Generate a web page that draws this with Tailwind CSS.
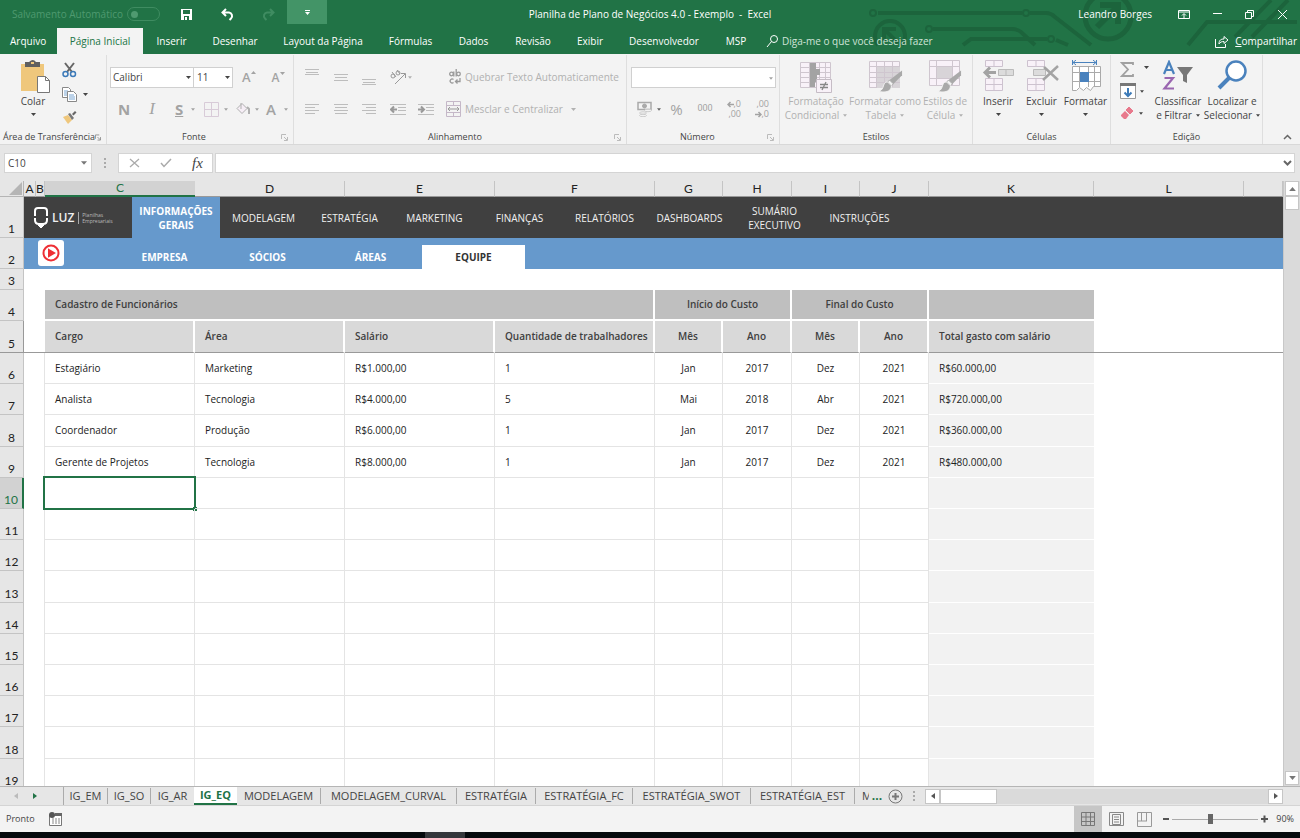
<!DOCTYPE html>
<html lang="pt-BR">

<head>
	<meta charset="UTF-8" />
	<meta name="viewport" content="width=device-width, initial-scale=1.0" />
	<title>Planilha de Plano de Negócios 4.0 - Exemplo - Excel</title>
	<script src="https://cdn.jsdelivr.net/npm/@tailwindcss/browser@4"></script>
</head>

<body class="h-screen flex flex-col overflow-hidden bg-[#e6e6e6] font-['Open_Sans',sans-serif] text-[10px] text-[#444]">
	<!-- shared glyphs -->
	<svg class="hidden">
		<symbol id="caret" viewBox="0 0 5 3"><path d="M0 0h5L2.500 3z" fill="currentColor" /></symbol>
		<symbol id="launcher" viewBox="0 0 7 7"><path d="M.5 5V.5H5M3 3l3 3M6.500 3v3.500H3" fill="none" stroke="currentColor" /></symbol>
		<symbol id="brush" viewBox="0 0 26 24">
			<path d="M25 1v5l-9 9-4-4z" fill="#a9a9a9" /><path d="M16 15l-4-4-2 2 4 4z" fill="#f3f3f3" stroke="#a9a9a9" />
			<path d="M10 13c-4 0-4 4-5 6s-2 3-4 4c5 1 13 1 13-6z" fill="#a9a9a9" stroke="#f3f3f3" />
		</symbol>
	</svg>

	<header class="relative shrink-0 bg-[#217346] text-white">
		<svg class="absolute right-0 top-0 w-[450px] h-[54px]" viewBox="0 0 450 54" fill="none" stroke="#1c643c" stroke-width="4">
			<path d="M28 13h144M180 13h16q5 0 9 4l36 28M83 29h79q5 0 9 3l14 13M113 45l8-6h76M206 40l12 5M338 45l19-23h90M402 37l36-37M385 37l36-37" />
			<circle cx="23" cy="13" r="3" stroke-width="2" /><circle cx="176" cy="13" r="3" stroke-width="2" />
			<circle cx="79" cy="29" r="3" stroke-width="2" /><circle cx="201" cy="39" r="3" stroke-width="2" />
			<path d="M28 45a15 15 0 1 1 24 0M34 41V29h12M34 29l14 14" />
			<circle cx="258" cy="16" r="23" stroke-width="5" /><path d="M247 27l21-21M250 5h18v19" stroke-width="6" />
		</svg>
		<div class="relative flex h-7 items-center">
			<div class="flex flex-1 items-center pl-3">
				<label for="autosave" class="w-[115px] text-[#4f9a70] whitespace-nowrap">Salvamento Automático</label>
				<span class="relative w-[33px] h-[14px] rounded-full border border-[#3f8c61]">
					<input id="autosave" type="checkbox" class="appearance-none absolute left-[3px] top-[3px] size-[7px] rounded-full bg-[#4f9a70]" />
				</span>
				<button aria-label="Salvar" class="ml-5"><svg width="13" height="13" viewBox="0 0 13 13"><path d="M1 1h11v11H1z" fill="#fff" /><path d="M3 2h7v4H3zM4 8h5v4H4z" fill="#217346" /><path d="M5 9h2v3H5z" fill="#fff" /></svg></button>
				<button aria-label="Desfazer" class="ml-7"><svg width="13" height="13" viewBox="0 0 13 13" fill="none" stroke="#fff" stroke-width="2"><path d="M5 1L1.500 4.500 5 8M2 4.500h6a3.500 3.500 0 0 1 2 6L8.500 12" /></svg></button>
				<button aria-label="Refazer" class="ml-7"><svg width="13" height="13" viewBox="0 0 13 13" fill="none" stroke="#3f8c61" stroke-width="2"><path d="M8 1l3.500 3.500L8 8M11 4.500H5a3.500 3.500 0 0 0-2 6L4.500 12" /></svg></button>
				<button aria-label="Personalizar" class="ml-3 mb-1 flex h-6 w-10 items-center justify-center bg-[#439467]"><svg width="5" height="5" viewBox="0 0 5 5"><path d="M0 0h5v1H0zM0 2h5L2.500 5z" fill="#fff" /></svg></button>
			</div>
			<h1 class="whitespace-pre">Planilha de Plano de Negócios 4.0 - Exemplo  -  Excel</h1>
			<div class="flex flex-1 items-center justify-end gap-[22px] pr-3">
				<a href="#" class="mr-1">Leandro Borges</a>
				<button aria-label="Opções da faixa"><svg width="12" height="11" viewBox="0 0 12 11" fill="none" stroke="#fff"><path d="M.5 1.500h11v8H.5zM.5 3h11M6 9V5M4 6.500L6 4.500l2 2" /></svg></button>
				<button aria-label="Minimizar"><svg width="10" height="10" viewBox="0 0 10 10"><path d="M1 4h9v1H1z" fill="#fff" /></svg></button>
				<button aria-label="Restaurar"><svg width="11" height="11" viewBox="0 0 11 11" fill="none" stroke="#fff"><path d="M1.500 3.500h6v6h-6zM3.500 3V1.500h6v6H8" /></svg></button>
				<button aria-label="Fechar"><svg width="11" height="11" viewBox="0 0 11 11" stroke="#fff"><path d="M1 1l9 9M10 1l-9 9" /></svg></button>
			</div>
		</div>
		<nav class="relative flex h-[26px] items-center whitespace-nowrap">
			<a href="#" class="w-[57px] pl-[10px]">Arquivo</a>
			<a href="#" class="flex h-full w-[86px] items-center justify-center bg-[#f3f3f3] text-[#217346]">Página Inicial</a>
			<a href="#" class="w-[57px] text-center">Inserir</a>
			<a href="#" class="w-[70px] text-center">Desenhar</a>
			<a href="#" class="w-[106px] text-center">Layout da Página</a>
			<a href="#" class="w-[69px] text-center">Fórmulas</a>
			<a href="#" class="w-[57px] text-center">Dados</a>
			<a href="#" class="w-[62px] text-center">Revisão</a>
			<a href="#" class="w-[52px] text-center">Exibir</a>
			<a href="#" class="w-24 text-center">Desenvolvedor</a>
			<a href="#" class="w-12 text-center">MSP</a>
			<label for="tellme" class="ml-[6px]"><svg width="13" height="14" viewBox="0 0 13 14" fill="none" stroke="#fff"><circle cx="8" cy="5" r="3.500" /><path d="M5.500 7.500L1 13" /></svg></label>
			<input id="tellme" placeholder="Diga-me o que você deseja fazer" class="ml-[3px] min-w-0 flex-1 outline-none placeholder:text-[#d0e3d8]" />
			<button class="flex items-center gap-[6px] pr-[3px]">
				<svg width="14" height="13" viewBox="0 0 14 13" fill="none" stroke="#fff"><path d="M.5 4v8.500h10V9M4 9c0-4 2-5 5-5V1.500L13 5 9 8.500V6.500C7 6.500 5 7 4 9z" /></svg>
				<span><u>C</u>ompartilhar</span>
			</button>
		</nav>
	</header>

	<section class="flex h-[91px] shrink-0 border-b border-[#d8d8d8] bg-[#f3f3f3] pt-px whitespace-nowrap">
		<div class="flex w-[107px] shrink-0 flex-col border-r border-[#dedede]">
			<div class="flex h-[76px]">
				<button class="ml-[15px] mt-[5px] flex w-9 flex-col items-center leading-[14px]">
					<svg class="shrink-0" width="36" height="34" viewBox="0 0 36 34"><path d="M6 4h23v27H6z" fill="#efc77c" /><path d="M10 2h4q4-4 7 0h4v5H10z" fill="#5f5f5f" /><path d="M16 2h3v2h-3z" fill="#efc77c" /><path d="M22.500 16.500h8l4 4v12h-12z" fill="#fff" stroke="#777" /><path d="M30.500 16.500v4h4" fill="none" stroke="#777" /></svg>
					<span>Colar</span>
					<svg class="mt-[5px]" width="5" height="3"><use href="#caret" /></svg>
				</button>
				<div class="ml-[11px] mt-[7px] flex flex-col gap-[9px]">
					<button aria-label="Recortar"><svg width="15" height="16" viewBox="0 0 15 16" fill="none"><path d="M3 1l7 9M12 1L5 10" stroke="#666" stroke-width="2" /><circle cx="3.500" cy="12" r="2.500" stroke="#3c7ab8" stroke-width="1.500" /><circle cx="11" cy="12" r="2.500" stroke="#3c7ab8" stroke-width="1.500" /></svg></button>
					<button aria-label="Copiar" class="flex items-center gap-[6px]"><svg width="15" height="15" viewBox="0 0 15 15"><path d="M.5.5h6l2 2v8h-8z" fill="#fff" stroke="#888" /><path d="M2 4h4M2 6h4M2 8h3" stroke="#7ba7d4" /><path d="M5.500 4.500h6l3 3v7h-9z" fill="#fff" stroke="#888" /><path d="M7 8h5M7 10h6M7 12h6" stroke="#7ba7d4" /></svg><svg width="5" height="3"><use href="#caret" /></svg></button>
					<button aria-label="Pincel de Formatação"><svg width="15" height="13" viewBox="0 0 15 13"><path d="M1 6l5-2 4 5-4 4z" fill="#efc77c" /><path d="M6 3l2-1 4 5-2 2z" fill="#777" /><path d="M10 3l3-3 1.500 1.500-3 3z" fill="#666" /></svg></button>
				</div>
			</div>
			<div class="flex items-center justify-between pl-[3px] pr-[5px] text-[9px] leading-[14px]"><span>Área de Transferência</span><svg width="7" height="7" class="text-[#888]"><use href="#launcher" /></svg></div>
		</div>

		<div class="flex w-[187px] shrink-0 flex-col border-r border-[#dedede]">
			<div class="flex h-[76px] flex-col pl-[3px]">
				<div class="mt-3 flex h-[21px] items-center">
					<label class="relative h-full border border-[#d0d0d0] bg-white"><select aria-label="Fonte" class="h-full w-[82px] appearance-none px-[2px] outline-none"><option>Calibri</option></select><svg class="absolute right-[2px] top-2" width="5" height="3"><use href="#caret" /></svg></label>
					<label class="relative -ml-px h-full border border-[#d0d0d0] bg-white"><select aria-label="Tamanho" class="h-full w-[38px] appearance-none px-[3px] outline-none"><option>11</option></select><svg class="absolute right-[2px] top-2" width="5" height="3"><use href="#caret" /></svg></label>
					<button aria-label="Aumentar fonte" class="ml-[9px] flex text-[13px] font-semibold text-[#a3a3a3]">A<svg width="5" height="3" class="rotate-180 mt-[3px]"><use href="#caret" /></svg></button>
					<button aria-label="Diminuir fonte" class="ml-4 flex text-[12px] font-semibold text-[#a3a3a3]">A<svg width="5" height="3" class="mt-[3px]"><use href="#caret" /></svg></button>
				</div>
				<div class="mt-[11px] flex h-5 items-center text-[15px] text-[#a3a3a3]">
					<button class="w-7 font-bold">N</button>
					<button class="w-7 font-['Liberation_Serif',serif] text-[17px] italic">I</button>
					<button class="flex w-[38px] items-center gap-2 pl-[9px]"><b class="underline">S</b><svg width="4" height="3"><use href="#caret" /></svg></button>
					<button aria-label="Bordas" class="flex w-8 items-center gap-[5px]"><svg width="15" height="15" viewBox="0 0 15 15" fill="none" stroke="#d8cbd8"><path d="M.5.5h14v14H.5zM7.500 0v15M0 7.500h15" /></svg><svg width="4" height="3"><use href="#caret" /></svg></button>
					<button aria-label="Preenchimento" class="flex w-[30px] items-center gap-[5px]"><svg width="14" height="14" viewBox="0 0 14 14" fill="none" stroke="#b0b0b0"><path d="M1 6.500l5-5 5 5-5 5zM5 1v6" fill="#f6eef6" /><path d="M11 5l2 2v5" stroke-width="2" /></svg><svg width="4" height="3"><use href="#caret" /></svg></button>
					<button class="flex w-6 items-center gap-2 font-semibold">A<svg class="shrink-0" width="4" height="3"><use href="#caret" /></svg></button>
				</div>
			</div>
			<div class="flex items-center justify-between pl-[75px] pr-[5px] text-[9px] leading-[14px]"><span>Fonte</span><svg width="7" height="7" class="text-[#bbb]"><use href="#launcher" /></svg></div>
		</div>

		<div class="flex w-[333px] shrink-0 flex-col border-r border-[#dedede]">
			<div class="flex h-[76px] flex-col pl-[11px] text-[#b1b1b1]">
				<div class="mt-3 flex h-5 items-center">
					<button aria-label="Alinhar em cima" class="w-[29px]"><svg width="14" height="16" viewBox="0 0 14 16" stroke="#bdbdbd"><path d="M0 .5h14M1 3.500h12M0 5.500h14" /></svg></button>
					<button aria-label="Alinhar no meio" class="w-7"><svg width="14" height="16" viewBox="0 0 14 16" stroke="#bdbdbd"><path d="M0 5.500h14M1 8.500h12M0 11.500h14" /></svg></button>
					<button aria-label="Alinhar embaixo" class="w-7"><svg width="14" height="16" viewBox="0 0 14 16" stroke="#bdbdbd"><path d="M0 10.500h14M1 13.500h12M0 15.500h14" /></svg></button>
					<button aria-label="Orientação" class="flex w-[59px] items-center gap-[2px]"><svg width="16" height="16" viewBox="0 0 16 16" fill="none" stroke="#999"><circle cx="3" cy="7" r="2" /><path d="M2 3l4 5" /><circle cx="8" cy="4" r="2" /><path d="M7 1l3 4M5 15L15 5M11 4.500h4.500V9" /></svg><svg width="4" height="3"><use href="#caret" /></svg></button>
					<button class="flex items-center gap-[4px]"><svg width="12" height="16" viewBox="0 0 12 16" fill="none" stroke="#999" stroke-width="1.300"><circle cx="2.500" cy="5" r="1.800" /><path d="M4.800 2.500V7.500M7.200 0v7.500" /><circle cx="9.500" cy="5" r="1.800" /><path d="M4.500 10.500a2 2 0 1 0 0 3M11 9v3.500H6.500M8.500 10.500l-2 2 2 2" /></svg>Quebrar Texto Automaticamente</button>
				</div>
				<div class="mt-3 flex h-5 items-center">
					<button aria-label="Esquerda" class="w-[29px]"><svg width="14" height="10" viewBox="0 0 14 10" stroke="#bdbdbd"><path d="M0 .5h14M0 3.500h10M0 6.500h14M0 9.500h10" /></svg></button>
					<button aria-label="Centro" class="w-7"><svg width="14" height="10" viewBox="0 0 14 10" stroke="#bdbdbd"><path d="M0 .5h14M1 3.500h12M0 6.500h14M1 9.500h12" /></svg></button>
					<button aria-label="Direita" class="w-7"><svg width="14" height="10" viewBox="0 0 14 10" stroke="#bdbdbd"><path d="M0 .5h14M4 3.500h10M0 6.500h14M4 9.500h10" /></svg></button>
					<button aria-label="Diminuir recuo" class="w-7"><svg width="16" height="11" viewBox="0 0 16 11" fill="none" stroke="#bdbdbd"><path d="M0 .5h16M8 3.500h8M8 6.500h8M0 10.500h16" /><path d="M7 5.500H1M4 2.500l-3 3 3 3" stroke="#999" stroke-width="2" /></svg></button>
					<button aria-label="Aumentar recuo" class="w-7"><svg width="16" height="11" viewBox="0 0 16 11" fill="none" stroke="#bdbdbd"><path d="M0 .5h16M8 3.500h8M8 6.500h8M0 10.500h16" /><path d="M0 5.500h6M3 2.500l3 3-3 3" stroke="#999" stroke-width="2" /></svg></button>
					<button class="flex items-center gap-1"><svg width="15" height="16" viewBox="0 0 15 16" fill="none" stroke="#c5b8c8"><path d="M.5.5h14v15H.5zM0 4.500h15M0 11.500h15M7.500 0v4M7.500 12v4" /><path d="M2 8h11M4 6L2 8l2 2M11 6l2 2-2 2" stroke="#999" /></svg>Mesclar e Centralizar<svg class="ml-1" width="5" height="3"><use href="#caret" /></svg></button>
				</div>
			</div>
			<div class="flex items-center justify-between pl-[134px] pr-[5px] text-[9px] leading-[14px]"><span>Alinhamento</span><svg width="7" height="7" class="text-[#bbb]"><use href="#launcher" /></svg></div>
		</div>

		<div class="flex w-[153px] shrink-0 flex-col border-r border-[#dedede]">
			<div class="flex h-[76px] flex-col pl-1 text-[#a3a3a3]">
				<label class="relative mt-3 mr-[3px] h-[21px] border border-[#d0d0d0] bg-white"><select aria-label="Formato de número" class="h-full w-full appearance-none outline-none"><option></option></select><svg class="absolute right-[2px] top-[9px]" width="4" height="3"><use href="#caret" /></svg></label>
				<div class="mt-[11px] flex h-5 items-center">
					<button aria-label="Moeda" class="ml-[6px] flex w-8 items-center gap-1"><svg width="16" height="16" viewBox="0 0 16 16" fill="none" stroke="#aaa"><path d="M1 1.500h13v7H1z" stroke-width="1.500" /><circle cx="7.500" cy="5" r="2" fill="#aaa" /><g stroke="#ccc"><ellipse cx="11" cy="9.500" rx="3.500" ry="1.200" fill="#f3f3f3" /><ellipse cx="6" cy="12" rx="3.500" ry="1.200" fill="#f3f3f3" /><ellipse cx="6" cy="14.500" rx="3.500" ry="1.200" fill="#f3f3f3" /></g></svg><svg class="text-[#666]" width="4" height="3"><use href="#caret" /></svg></button>
					<button class="w-[15px] text-[15px]">%</button>
					<button class="ml-[13px] w-4 font-['Roboto',sans-serif] text-[9px]">000</button>
					<button class="ml-3 flex w-4 flex-col items-end text-[9px] leading-[10px]"><span class="flex items-center"><svg width="7" height="7" viewBox="0 0 7 7" fill="none" stroke="currentColor" stroke-width="1.500"><path d="M7 3.500H1M3.500 1L1 3.500 3.500 6" /></svg>,0</span><span>,00</span></button>
					<button class="ml-3 flex w-4 flex-col items-end text-[9px] leading-[10px]"><span>,00</span><span class="flex items-center"><svg width="7" height="7" viewBox="0 0 7 7" fill="none" stroke="currentColor" stroke-width="1.500"><path d="M0 3.500h6M3.500 1L6 3.500 3.500 6" /></svg>,0</span></button>
				</div>
			</div>
			<div class="flex items-center justify-between pl-[53px] pr-[5px] text-[9px] leading-[14px]"><span>Número</span><svg width="7" height="7" class="text-[#bbb]"><use href="#launcher" /></svg></div>
		</div>

		<div class="flex w-[193px] shrink-0 flex-col border-r border-[#dedede]">
			<div class="flex h-[76px] pl-[2px] pt-[5px] text-[#b1b1b1] leading-[14px]">
				<button class="flex w-[68px] flex-col items-center">
					<svg class="shrink-0" width="34" height="34" viewBox="0 0 34 34"><path d="M1.500 2.500h30v25h-30z" fill="#f8f1f8" stroke="#cfc6cf" /><path d="M1 7.500h31M1 12.500h31M1 17.500h31M1 22.500h31M10.500 2v26M20.500 2v26M26.500 2v26" stroke="#cfc6cf" /><path d="M11 3h6v6h4v6h-3v7h-2v5h-5z" fill="#a3a3a3" /><path d="M17.500 19.500h15v13h-15z" fill="#f8f1f8" stroke="#c5bcc5" /><path d="M21 24.500h8M21 27.500h8M27 22l-4 8" stroke="#888" stroke-width="1.300" /></svg>
					<span>Formatação</span><span class="flex items-center gap-[4px]">Condicional<svg width="4" height="3"><use href="#caret" /></svg></span>
				</button>
				<button class="flex w-[70px] flex-col items-center">
					<svg class="shrink-0" width="36" height="34" viewBox="0 0 36 34"><path d="M2.500 1.500h30v26h-30z" fill="#f8f1f8" stroke="#cfc6cf" /><path d="M10 7h23v21H10z" fill="#d8d4d8" /><path d="M2 6.500h31M2 12.500h31M2 17.500h31M2 22.500h31M9.500 1v26M17.500 1v26M25.500 1v26" stroke="#cfc6cf" /><use href="#brush" x="11" y="9" width="25" height="24" /></svg>
					<span>Formatar como</span><span class="flex items-center gap-[4px]">Tabela<svg width="4" height="3"><use href="#caret" /></svg></span>
				</button>
				<button class="flex w-[50px] flex-col items-center">
					<svg class="shrink-0" width="34" height="34" viewBox="0 0 34 34"><path d="M1.500.5h30v25h-30z" fill="#f8f1f8" stroke="#cfc6cf" /><path d="M1 6.500h31M1 18.500h31M8.500 0v26M24.500 0v26" stroke="#cfc6cf" /><path d="M9 7h15v11H9z" fill="#d8d4d8" /><use href="#brush" x="9" y="9" width="25" height="24" /></svg>
					<span>Estilos de</span><span class="flex items-center gap-[4px]">Célula<svg width="4" height="3"><use href="#caret" /></svg></span>
				</button>
			</div>
			<div class="text-center text-[9px] leading-[14px]">Estilos</div>
		</div>

		<div class="flex w-[138px] shrink-0 flex-col border-r border-[#dedede]">
			<div class="flex h-[76px] pl-[3px] pt-[5px] leading-[14px]">
				<button class="flex w-11 flex-col items-center">
					<svg class="shrink-0" width="34" height="34" viewBox="0 0 34 34" fill="#f8f1f8" stroke="#cdc2cf"><path d="M4.500.5h17v6h-17zM13 0v7M4.500 18.500h17v12h-17zM13 18v13M4 24.500h18" /><path d="M17.500 9.500h15v6h-15z" fill="#dcdcdc" stroke="#bbb" /><path d="M25 9v7" stroke="#bbb" /><path d="M15 12.500H4M9 7.500l-5 5 5 5" stroke="#a3a3a3" stroke-width="3" fill="none" /></svg>
					<span>Inserir</span><svg class="mt-[5px]" width="5" height="3"><use href="#caret" /></svg>
				</button>
				<button class="flex w-[43px] flex-col items-center">
					<svg class="shrink-0" width="34" height="34" viewBox="0 0 34 34" fill="#f8f1f8" stroke="#cdc2cf"><path d="M2.500.5h17v6h-17zM11 0v7M2.500 18.500h17v12h-17zM11 18v13M2 24.500h18" /><path d="M8.500 9.500h12v6h-12z" fill="#dcdcdc" stroke="#bbb" /><path d="M19 7l14 13M33 6L18 20" stroke="#a3a3a3" stroke-width="2.500" fill="none" /></svg>
					<span>Excluir</span><svg class="mt-[5px]" width="5" height="3"><use href="#caret" /></svg>
				</button>
				<button class="flex w-[45px] flex-col items-center">
					<svg class="shrink-0" width="32" height="34" viewBox="0 0 32 34" fill="#fff" stroke="#aaa"><path d="M2.500 6.500h28v20h-7l-3 4-4-3-3 3-4-3-3 3h-4z" /><path d="M2 12.500h28M2 21.500h28M9.500 6v21M18.500 6v21M24.500 6v21" /><path d="M10 12h9v10h-9z" fill="#4a82bd" stroke="none" /><path d="M3 2.500h23M6 0L3 2.500 6 5M23 0l3 2.500L23 5M2.500 0v5M26.500 0v5" stroke="#4a82bd" fill="none" /></svg>
					<span>Formatar</span><svg class="mt-[5px]" width="5" height="3"><use href="#caret" /></svg>
				</button>
			</div>
			<div class="text-center text-[9px] leading-[14px]">Células</div>
		</div>

		<div class="flex w-[152px] shrink-0 flex-col border-r border-[#dedede]">
			<div class="flex h-[76px] pl-[9px] pt-[3px] leading-[14px]">
				<div class="flex w-8 flex-col">
					<button aria-label="Soma" class="flex h-[22px] items-center gap-[10px]"><svg width="14" height="15" viewBox="0 0 14 15" fill="none" stroke="#a0a0a0" stroke-width="1.800"><path d="M13 3V1H2l6 6.500L2 14h11v-2" /></svg><svg class="mb-1" width="5" height="3"><use href="#caret" /></svg></button>
					<button aria-label="Preencher" class="flex h-[22px] items-center gap-1"><svg width="16" height="16" viewBox="0 0 16 16" fill="#fff" stroke="#999"><path d="M.5 2.500h15v13H.5z" /><path d="M0 1.500h16" stroke="#777" stroke-width="3" /><path d="M8 5v8M4.500 9.500L8 13l3.500-3.500" fill="none" stroke="#3c7ab8" stroke-width="2" /></svg><svg width="4" height="3"><use href="#caret" /></svg></button>
					<button aria-label="Limpar" class="flex h-[22px] items-center gap-1"><svg width="15" height="13" viewBox="0 0 15 13"><path d="M9 0l4 4-3 3-4-4z" fill="#e8798c" stroke="#e8798c" stroke-linejoin="round" /><path d="M5 4l4 4-3 4H4L1 9V8z" fill="#e8798c" /></svg><svg width="4" height="3"><use href="#caret" /></svg></button>
				</div>
				<button class="flex w-[52px] flex-col items-center pt-[2px]">
					<svg class="shrink-0" width="32" height="34" viewBox="0 0 32 34" fill="none" stroke-width="2.200"><path d="M2 14L7 2l5 12M4 10h6" stroke="#4a82bd" /><path d="M2.500 18H11L2.500 28.500H12" stroke="#9a66b0" /><path d="M15 7h16l-6 8v8l-4-2v-6z" fill="#777" /></svg>
					<span>Classificar</span><span class="flex items-center gap-[4px]">e Filtrar<svg width="4" height="3"><use href="#caret" /></svg></span>
				</button>
				<button class="flex w-[56px] flex-col items-center pt-[2px]">
					<svg class="shrink-0" width="32" height="34" viewBox="0 0 32 34" fill="none" stroke="#4a82bd"><circle cx="20" cy="11" r="9.500" fill="#fff" stroke-width="2.500" /><path d="M13 18L3 28" stroke-width="4" /></svg>
					<span>Localizar e</span><span class="flex items-center gap-[4px]">Selecionar<svg width="4" height="3"><use href="#caret" /></svg></span>
				</button>
			</div>
			<div class="text-center text-[9px] leading-[14px]">Edição</div>
		</div>
		<button aria-label="Recolher" class="ml-auto mr-2 self-end pb-1"><svg width="9" height="6" viewBox="0 0 9 6" fill="none" stroke="#666" stroke-width="1.500"><path d="M1 5l3.500-3.500L8 5" /></svg></button>
	</section>

	<section class="flex h-9 shrink-0 items-start pt-2">
		<label class="relative ml-1"><input aria-label="Caixa de nome" value="C10" class="h-[20px] w-[88px] border border-[#d4d4d4] bg-white px-[3px] outline-none" /><svg class="absolute right-[5px] top-[8px] text-[#777]" width="6" height="4"><use href="#caret" /></svg></label>
		<svg class="mx-[10px] mt-[5px]" width="6" height="10" viewBox="0 0 6 10" fill="#aaa"><path d="M2 0h2v2H2zM2 4h2v2H2zM2 8h2v2H2z" /></svg>
		<div class="flex h-5 w-[95px] items-center border border-[#d4d4d4] bg-white">
			<button aria-label="Cancelar" class="ml-[10px]"><svg width="11" height="10" viewBox="0 0 11 10" stroke="#aaa" stroke-width="1.300"><path d="M1 1l9 8M10 1L1 9" /></svg></button>
			<button aria-label="Inserir valor" class="ml-5"><svg width="12" height="10" viewBox="0 0 12 10" fill="none" stroke="#aaa" stroke-width="1.500"><path d="M1 5l3 3.500L11 1" /></svg></button>
			<button class="ml-5 font-['Liberation_Serif',serif] text-[15px] italic">fx</button>
		</div>
		<label class="relative ml-[2px] mr-[5px] flex-1"><input aria-label="Barra de fórmulas" class="h-5 w-full border border-[#d4d4d4] bg-white px-1 outline-none" /><svg class="absolute right-[3px] top-[7px]" width="9" height="6" viewBox="0 0 9 6" fill="none" stroke="#666" stroke-width="2"><path d="M1 1l3.500 3.500L8 1" /></svg></label>
	</section>

	<main class="flex min-h-0 flex-1">
		<div class="min-w-0 flex-1 overflow-hidden bg-white">
			<table class="w-full table-fixed border-separate border-spacing-0 text-[10px] text-[#222]">
				<colgroup>
					<col class="w-6"><col class="w-3"><col class="w-[9px]"><col class="w-[150px]"><col class="w-[150px]"><col class="w-[150px]"><col class="w-[160px]"><col class="w-[68px]"><col class="w-[69px]"><col class="w-[68px]"><col class="w-[69px]"><col class="w-[165px]"><col class="w-[150px]"><col>
				</colgroup>
				<thead>
					<tr id="letters" class="h-4 bg-[#e6e6e6] font-['Lato',sans-serif]">
						<th class="border-b border-r border-[#b5b5b5] p-0"><svg class="ml-auto mr-[1px]" width="13" height="13" viewBox="0 0 13 13"><path d="M13 0v13H0z" fill="#b5b5b5" /></svg></th>
					</tr>
				</thead>
				<tbody id="sheet">
					<tr class="h-[41px]">
						<th class="border-b border-r border-[#c4c4c4] bg-[#e6e6e6] p-0 align-bottom font-['Lato',sans-serif] text-[12px] font-normal leading-4">1</th>
						<td colspan="13" class="bg-[#404040] p-0">
							<nav class="flex h-[41px] items-stretch leading-[14px] text-[#f0f0f0]">
								<a href="#" class="flex w-[108px] items-center pl-[9px]">
									<svg width="16" height="22" viewBox="0 0 16 22" fill="none" stroke="#fff" stroke-width="2"><path d="M2 9V4q0-3 3-3h6q3 0 3 3v5M2 11v2q0 4 4 4h4q4 0 4-4v-2" /><path d="M5 18h6l-3 3z" fill="#fff" stroke-width="1" /></svg>
									<span class="ml-[3px] text-[12px] font-semibold">LUZ</span>
									<span class="ml-1 border-l border-[#aaa] pl-[3px] text-[5px] leading-[6px] text-[#bbb]">Planilhas<br>Empresariais</span>
								</a>
								<a href="#" class="flex w-[88px] items-center justify-center bg-[#6699cc] text-center font-bold text-white">INFORMAÇÕES<br>GERAIS</a>
								<a href="#" class="flex w-[87px] items-center justify-center">MODELAGEM</a>
								<a href="#" class="flex w-[85px] items-center justify-center">ESTRATÉGIA</a>
								<a href="#" class="flex w-[85px] items-center justify-center">MARKETING</a>
								<a href="#" class="flex w-[85px] items-center justify-center">FINANÇAS</a>
								<a href="#" class="flex w-[85px] items-center justify-center">RELATÓRIOS</a>
								<a href="#" class="flex w-[85px] items-center justify-center">DASHBOARDS</a>
								<a href="#" class="flex w-[85px] items-center justify-center text-center">SUMÁRIO<br>EXECUTIVO</a>
								<a href="#" class="flex w-[85px] items-center justify-center">INSTRUÇÕES</a>
							</nav>
						</td>
					</tr>
					<tr class="h-[31px]">
						<th class="border-b border-r border-[#c4c4c4] bg-[#e6e6e6] p-0 align-bottom font-['Lato',sans-serif] text-[12px] font-normal leading-4">2</th>
						<td colspan="13" class="bg-[#6699cc] p-0">
							<nav class="flex h-[31px] items-end font-bold text-white">
								<a href="#" aria-label="Vídeo" class="mb-[3px] ml-[14px] mr-[49px] flex size-[26px] items-center justify-center rounded-[3px] bg-white"><svg width="18" height="18" viewBox="0 0 18 18" fill="none" stroke="#ee2f35" stroke-width="2"><circle cx="9" cy="9" r="7.500" /><path d="M7 6l5 3-5 3z" fill="#ee2f35" /></svg></a>
								<a href="#" class="flex h-6 w-[103px] items-center justify-center">EMPRESA</a>
								<a href="#" class="flex h-6 w-[103px] items-center justify-center">SÓCIOS</a>
								<a href="#" class="flex h-6 w-[103px] items-center justify-center">ÁREAS</a>
								<a href="#" class="flex h-6 w-[103px] items-center justify-center bg-white text-[#333]">EQUIPE</a>
							</nav>
						</td>
					</tr>
					<tr class="h-[21px]">
						<th class="border-b border-r border-[#c4c4c4] bg-[#e6e6e6] p-0 align-bottom font-['Lato',sans-serif] text-[12px] font-normal leading-4">3</th>
						<td colspan="13" class="p-0"></td>
					</tr>
					<tr class="h-[31px] text-[#404040]">
						<th class="border-b border-r border-[#c4c4c4] bg-[#e6e6e6] p-0 align-bottom font-['Lato',sans-serif] text-[12px] font-normal leading-4 text-[#222]">4</th>
						<td colspan="2" class="p-0"></td>
						<th colspan="4" class="border-b-2 border-r-2 border-white bg-[#bfbfbf] px-[10px] py-0 text-left font-semibold">Cadastro de Funcionários</th>
						<th colspan="2" class="border-b-2 border-r-2 border-white bg-[#bfbfbf] p-0 font-semibold">Início do Custo</th>
						<th colspan="2" class="border-b-2 border-r-2 border-white bg-[#bfbfbf] p-0 font-semibold">Final do Custo</th>
						<th class="border-b-2 border-white bg-[#bfbfbf] p-0"></th>
						<td colspan="2" class="p-0"></td>
					</tr>
					<tr class="h-[32px] text-[#404040]">
						<th class="border-b border-r border-[#999] bg-[#e6e6e6] p-0 align-bottom font-['Lato',sans-serif] text-[12px] font-normal leading-4 text-[#222]">5</th>
						<td colspan="2" class="border-b border-[#999] p-0"></td>
						<th class="border-b border-r-2 border-b-[#999] border-r-white bg-[#d9d9d9] px-[10px] py-0 text-left font-semibold">Cargo</th>
						<th class="border-b border-r-2 border-b-[#999] border-r-white bg-[#d9d9d9] px-[10px] py-0 text-left font-semibold">Área</th>
						<th class="border-b border-r-2 border-b-[#999] border-r-white bg-[#d9d9d9] px-[10px] py-0 text-left font-semibold">Salário</th>
						<th class="whitespace-nowrap border-b border-r-2 border-b-[#999] border-r-white bg-[#d9d9d9] py-0 pl-[10px] pr-0 text-left font-semibold">Quantidade de trabalhadores</th>
						<th class="border-b border-r-2 border-b-[#999] border-r-white bg-[#d9d9d9] p-0 font-semibold">Mês</th>
						<th class="border-b border-r-2 border-b-[#999] border-r-white bg-[#d9d9d9] p-0 font-semibold">Ano</th>
						<th class="border-b border-r-2 border-b-[#999] border-r-white bg-[#d9d9d9] p-0 font-semibold">Mês</th>
						<th class="border-b border-r-2 border-b-[#999] border-r-white bg-[#d9d9d9] p-0 font-semibold">Ano</th>
						<th class="border-b border-[#999] bg-[#d9d9d9] px-[10px] py-0 text-left font-semibold">Total gasto com salário</th>
						<td colspan="2" class="border-b border-[#999] p-0"></td>
					</tr>
				</tbody>
			</table>
		</div>
		<div class="flex w-[17px] shrink-0 flex-col items-center border-l border-[#c8c8c8] bg-[#dadada]">
			<button aria-label="Rolar para cima" class="flex h-[15px] w-[14px] items-center justify-center border border-[#c6c6c6] bg-white"><svg class="rotate-180 text-[#777]" width="7" height="4"><use href="#caret" /></svg></button>
			<div class="h-[14px] w-[14px] border border-[#c6c6c6] bg-white"></div>
			<button aria-label="Rolar para baixo" class="mb-[1px] mt-auto flex h-[14px] w-[14px] items-center justify-center border border-[#c6c6c6] bg-white"><svg class="text-[#777]" width="7" height="4"><use href="#caret" /></svg></button>
		</div>
	</main>

	<footer class="shrink-0">
		<div class="flex h-[19px] items-center border-t border-[#b5b5b5] text-[11px] leading-4 whitespace-nowrap">
			<button aria-label="Abas anteriores" class="ml-[14px]"><svg width="4" height="6" viewBox="0 0 4 6"><path d="M4 0v6L0 3z" fill="#bbb" /></svg></button>
			<button aria-label="Próximas abas" class="ml-[15px]"><svg width="4" height="6" viewBox="0 0 4 6"><path d="M0 0v6l4-3z" fill="#217346" /></svg></button>
			<nav class="ml-[26px] flex h-full items-center border-l border-[#ababab]">
				<a href="#" class="w-11 border-r border-[#ababab] text-center">IG_EM</a>
				<a href="#" class="w-[43px] border-r border-[#ababab] text-center">IG_SO</a>
				<a href="#" class="w-[43px] text-center">IG_AR</a>
				<a href="#" class="h-[18px] w-[43px] border-b-2 border-[#217346] bg-white text-center font-bold text-[#217346]">IG_EQ</a>
				<a href="#" class="w-[84px] border-r border-[#ababab] text-center">MODELAGEM</a>
				<a href="#" class="w-[136px] border-r border-[#ababab] text-center">MODELAGEM_CURVAL</a>
				<a href="#" class="w-[79px] border-r border-[#ababab] text-center">ESTRATÉGIA</a>
				<a href="#" class="w-[97px] border-r border-[#ababab] text-center">ESTRATÉGIA_FC</a>
				<a href="#" class="w-[118px] border-r border-[#ababab] text-center">ESTRATÉGIA_SWOT</a>
				<a href="#" class="w-[104px] border-r border-[#ababab] text-center">ESTRATÉGIA_EST</a>
				<a href="#" class="ml-[7px] w-[7px] overflow-hidden">M</a>
			</nav>
			<button class="ml-[2px] w-3 text-[12px] font-bold text-[#217346]">...</button>
			<button aria-label="Nova planilha" class="ml-[5px]"><svg width="15" height="15" viewBox="0 0 15 15" fill="none" stroke="#777"><circle cx="7.500" cy="7.500" r="6.500" /><path d="M7.500 4v7M4 7.500h7" stroke-width="2" /></svg></button>
			<svg class="mx-2" width="6" height="10" viewBox="0 0 6 10" fill="#aaa"><path d="M2 0h2v2H2zM2 4h2v2H2zM2 8h2v2H2z" /></svg>
			<div class="mr-[17px] flex h-[15px] flex-1 bg-[#dadada]">
				<button aria-label="Rolar para a esquerda" class="flex w-[15px] items-center justify-center border border-[#c6c6c6] bg-white"><svg width="4" height="6" viewBox="0 0 4 6"><path d="M4 0v6L0 3z" fill="#555" /></svg></button>
				<div class="w-[57px] border border-[#c6c6c6] bg-white"></div>
				<button aria-label="Rolar para a direita" class="ml-auto flex w-[15px] items-center justify-center border border-[#c6c6c6] bg-white"><svg width="4" height="6" viewBox="0 0 4 6"><path d="M0 0v6l4-3z" fill="#555" /></svg></button>
			</div>
		</div>
		<div class="flex h-[27px] items-center border-t border-[#d4d4d4] bg-[#f3f3f3] text-[9px]">
			<span class="ml-[6px] w-[43px]">Pronto</span>
			<button aria-label="Gravar macro"><svg width="13" height="14" viewBox="0 0 13 14"><path d="M.5 3.500h12v10H.5z" fill="#fff" stroke="#777" /><path d="M6 1h7v3H6z" fill="#666" /><circle cx="3" cy="3" r="3" fill="#555" /><path d="M3 7h2M6 7h2M9 7h2M3 9h2M6 9h2M9 9h2M3 11h2M6 11h2M9 11h2" stroke="#888" /></svg></button>
			<button aria-label="Normal" class="ml-auto flex h-full w-7 items-center justify-center bg-[#c6c6c6]"><svg width="14" height="14" viewBox="0 0 14 14" fill="none" stroke="#777"><path d="M.5.5h13v13H.5zM5 0v14M9.500 0v14M0 5h14M0 9.500h14" /></svg></button>
			<button aria-label="Layout da Página" class="flex w-7 items-center justify-center"><svg width="15" height="14" viewBox="0 0 15 14" fill="none" stroke="#888"><path d="M.5.5h14v13H.5zM3.500 2.500h8v10h-8zM5 5h5M5 7.500h5M5 10h5" /></svg></button>
			<button aria-label="Quebra de Página" class="flex w-7 items-center justify-center"><svg width="15" height="15" viewBox="0 0 15 15" fill="none" stroke="#999"><path d="M.5.5h14v14H.5zM4.500 0v9M9.500 0v9M0 9h10" /></svg></button>
			<button aria-label="Reduzir" class="ml-[5px]"><svg width="6" height="8" viewBox="0 0 6 8"><path d="M0 3h6v2H0z" fill="#555" /></svg></button>
			<input type="range" aria-label="Zoom" min="10" max="190" value="90" class="mx-[3px] h-[10px] w-[86px] appearance-none bg-[linear-gradient(#aaa,#aaa)] bg-[length:100%_1px] bg-center bg-no-repeat [&::-webkit-slider-thumb]:h-[10px] [&::-webkit-slider-thumb]:w-[5px] [&::-webkit-slider-thumb]:appearance-none [&::-webkit-slider-thumb]:bg-[#666]" />
			<button aria-label="Ampliar"><svg width="7" height="8" viewBox="0 0 7 8"><path d="M0 3h7v2H0zM2.500.5h2v7h-2z" fill="#555" /></svg></button>
			<span class="ml-2 mr-[6px]">90%</span>
		</div>
		<div class="h-[6px] bg-[#04090c]"><div class="ml-[425px] h-full w-10 bg-[#34373b]"></div></div>
	</footer>

	<script>
		const employees = [
			['Estagiário', 'Marketing', 'R$1.000,00', '1', 'Jan', '2017', 'Dez', '2021', 'R$60.000,00'],
			['Analista', 'Tecnologia', 'R$4.000,00', '5', 'Mai', '2018', 'Abr', '2021', 'R$720.000,00'],
			['Coordenador', 'Produção', 'R$6.000,00', '1', 'Jan', '2017', 'Dez', '2021', 'R$360.000,00'],
			['Gerente de Projetos', 'Tecnologia', 'R$8.000,00', '1', 'Jan', '2017', 'Dez', '2021', 'R$480.000,00'],
		]
		const FIRST_ROW = 6
		const LAST_ROW = 19
		const ACTIVE_ROW = 10

		const letters = document.getElementById('letters')
		'ABCDEFGHIJKL'.split('').concat('').forEach(letter => {
			const th = document.createElement('th')
			th.className = letter === 'C'
				? 'border-b-2 border-[#217346] bg-[#d2d2d2] p-0 text-[12px] font-normal leading-[14px] text-[#217346]'
				: 'border-b border-r border-b-[#999] border-r-[#c4c4c4] p-0 text-[12px] font-normal leading-[14px]'
			th.textContent = letter
			letters.appendChild(th)
		})

		const sheet = document.getElementById('sheet')
		for (let n = FIRST_ROW; n <= LAST_ROW; n++) {
			const values = employees[n - FIRST_ROW] || Array(9).fill('')
			const active = n === ACTIVE_ROW
			const tr = document.createElement('tr')
			// row height is 31.2px at 90% zoom, so every fifth row gets the extra pixel
			tr.className = n % 5 === 3 ? 'h-[32px]' : 'h-[31px]'
			const head = active
				? "border-b border-r-2 border-b-[#c4c4c4] border-r-[#217346] bg-[#d2d2d2] p-0 align-bottom font-['Lato',sans-serif] text-[12px] font-normal leading-4 text-[#217346]"
				: "border-b border-r border-[#c4c4c4] bg-[#e6e6e6] p-0 align-bottom font-['Lato',sans-serif] text-[12px] font-normal leading-4"
			const cells = values.map((value, i) => {
				if (i === 8) return `<td class="border-b border-white bg-[#f2f2f2] px-[10px] py-0">${value}</td>`
				if (i >= 4) return `<td class="border-b border-r border-[#e4e4e4] p-0 text-center">${value}</td>`
				const marker = active && i === 0
					? '<div class="absolute -inset-[2px] border-2 border-[#217346]"><div class="absolute -bottom-[3px] -right-[3px] size-1 bg-[#217346]"></div></div>'
					: ''
				return `<td class="relative border-b border-r border-[#e4e4e4] px-[10px] py-0">${value}${marker}</td>`
			})
			tr.innerHTML = `<th class="${head}">${n}</th><td class="p-0"></td><td class="border-r border-[#e4e4e4] p-0"></td>${cells.join('')}<td class="p-0"></td><td class="p-0"></td>`
			sheet.appendChild(tr)
		}
	</script>
</body>

</html>
